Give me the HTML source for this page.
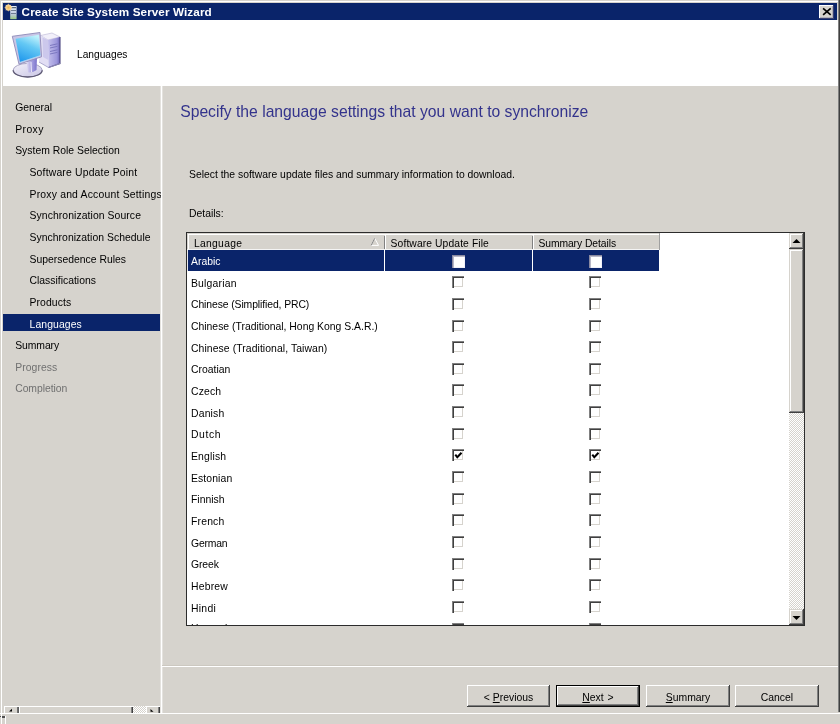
<!DOCTYPE html><html><head><meta charset="utf-8"><style>
html,body{margin:0;padding:0;width:840px;height:724px;overflow:hidden;font-family:"Liberation Sans",sans-serif}
u{text-decoration:underline;text-underline-offset:1px}
</style></head><body><div style="position:relative;width:840px;height:724px;overflow:hidden;will-change:transform">
<div style="position:absolute;left:0px;top:0px;width:840px;height:724px;background:#D6D3CD"></div>
<div style="position:absolute;left:1px;top:1px;width:838px;height:1px;background:#fff"></div>
<div style="position:absolute;left:1px;top:1px;width:1px;height:723px;background:#fff"></div>
<div style="position:absolute;left:838px;top:0px;width:1px;height:712px;background:#808080"></div>
<div style="position:absolute;left:839px;top:0px;width:1px;height:712px;background:#404040"></div>
<div style="position:absolute;left:3px;top:3px;width:834px;height:17px;background:#0A246A"></div>
<div style="position:absolute;left:21.60px;top:6.00px;font-size:11.7px;line-height:11.7px;color:#fff;font-weight:bold;white-space:nowrap;letter-spacing:0.1px">Create Site System Server Wizard</div>
<div style="position:absolute;left:819px;top:5px;width:15px;height:14px;background:#D6D3CD;box-shadow:inset -1px -1px #3A4070, inset 1px 1px #fff, inset -2px -2px #B0B0B8"></div>
<svg style="position:absolute;left:819px;top:5px" width="16" height="14"><path d="M4.1 3.4 L11.7 9.9 M11.7 3.4 L4.1 9.9" stroke="#000" stroke-width="1.7"/></svg>
<div style="position:absolute;left:3px;top:20px;width:835px;height:66px;background:#fff"></div>
<div style="position:absolute;left:77.00px;top:50.47px;font-size:10.2px;line-height:10.2px;color:#000;font-weight:normal;white-space:nowrap;">Languages</div>
<svg style="position:absolute;left:3px;top:3px" width="18" height="18" viewBox="3 3 18 18">
<defs><linearGradient id="srv" x1="0" y1="0" x2="0" y2="1"><stop offset="0" stop-color="#E8F0F8"/><stop offset="0.6" stop-color="#C0CCE0"/><stop offset="1" stop-color="#98C880"/></linearGradient>
<radialGradient id="sun"><stop offset="0" stop-color="#F2B850"/><stop offset="1" stop-color="#F8DCA8"/></radialGradient></defs>
<rect x="10.2" y="6" width="6.4" height="13.2" fill="url(#srv)"/>
<rect x="11" y="7.2" width="5" height="1" fill="#3A4A60"/>
<rect x="11" y="10" width="5" height="0.8" fill="#5A6A80"/>
<rect x="11" y="13.2" width="5" height="0.8" fill="#5A6A80"/>
<circle cx="8.4" cy="7.6" r="3.1" fill="url(#sun)"/><path d="M8.4 3.6 L9.2 4.8 L7.6 4.8 Z M4.4 7.6 L5.6 6.8 L5.6 8.4 Z M12.4 7.6 L11.2 6.8 L11.2 8.4 Z M8.4 11.6 L9.2 10.4 L7.6 10.4 Z M5.6 4.8 L6.9 5.2 L6 6.1 Z M11.2 4.8 L10.8 6.1 L9.9 5.2 Z M5.6 10.4 L6 9.1 L6.9 10 Z M11.2 10.4 L9.9 10 L10.8 9.1 Z" fill="#F6D090"/>
</svg>
<svg style="position:absolute;left:5px;top:25px" width="65" height="60" viewBox="5 25 65 60">
<defs>
<linearGradient id="scr" x1="0.7" y1="0" x2="0.3" y2="1"><stop offset="0" stop-color="#C0F2FC"/><stop offset="0.4" stop-color="#64C8F4"/><stop offset="1" stop-color="#2098EC"/></linearGradient>
<linearGradient id="neck" x1="0" y1="0" x2="1" y2="0"><stop offset="0" stop-color="#E8E4F6"/><stop offset="0.5" stop-color="#A8A2E0"/><stop offset="1" stop-color="#7A72CC"/></linearGradient>
<linearGradient id="front" x1="0" y1="0" x2="1" y2="0"><stop offset="0" stop-color="#C4C0EC"/><stop offset="0.75" stop-color="#9A94DA"/><stop offset="1" stop-color="#6A62B8"/></linearGradient>
<linearGradient id="basef" x1="0" y1="0" x2="1" y2="1"><stop offset="0" stop-color="#F4F2FA"/><stop offset="1" stop-color="#C8C4E4"/></linearGradient>
</defs>
<!-- tower -->
<path d="M40.5 35.5 L52 33 L60 37 L48 40 Z" fill="#F2F0FA" stroke="#B8B4D4" stroke-width="0.6"/>
<path d="M40.5 35.5 L48 40 L48.5 67.5 L39 62 Z" fill="#E2DEF4"/><path d="M42.5 37.5 L48 40 L48.3 60 L43 57 Z" fill="#CCC8EC"/>
<path d="M48 40 L60 37 L60 63.5 L48.5 67.5 Z" fill="url(#front)"/>
<path d="M60 37 L60 63.5 L48.5 67.5" fill="none" stroke="#4C4680" stroke-width="1.1"/>
<path d="M50 45.5 L57.5 43.8 M50 48 L57.5 46.3 M50 51.5 L57.5 49.8 M50 54 L57.5 52.3" stroke="#7C78C0" stroke-width="1"/>
<path d="M39 62 L48.5 67.5 L60 63.5" fill="none" stroke="#9C98C4" stroke-width="0.8"/>
<!-- base -->
<ellipse cx="27.7" cy="70.2" rx="14.5" ry="6.8" fill="url(#basef)" stroke="#A8A4C4" stroke-width="1"/><path d="M13.2 70.2 A14.5 6.8 0 0 0 42.2 70.2" fill="none" stroke="#5E5A74" stroke-width="1.3"/>
<path d="M26 59.5 L37 57 L36.5 70 Q33 73 28 72.3 Z" fill="url(#neck)"/><path d="M31 62 L31.5 72" stroke="#F0EEFA" stroke-width="0.9"/>
<!-- monitor -->
<path d="M12.3 36.3 L40 32.5 L41.5 56.8 L19 64.2 Z" fill="#C8C6E6" stroke="#8E8AB8" stroke-width="0.9"/>
<path d="M15.6 38.8 L39 34.8 L40.4 55.6 L20 62.3 Z" fill="url(#scr)"/>
<path d="M20 62.3 L40.4 55.6" stroke="#A8D8F8" stroke-width="0.8"/>
</svg>
<div style="position:absolute;left:3px;top:705px;width:158px;height:8px;background:#D6D3CD"></div>
<div style="position:absolute;left:19px;top:706px;width:114px;height:7px;background:#D6D3CD;box-shadow:inset 1px 1px #fff, inset -1px 0 #404040, inset -2px 0 #808080"></div>
<div style="position:absolute;left:133px;top:706px;width:13px;height:7px;background-color:#fff;background-image:repeating-conic-gradient(#D6D3CD 0 25%, #fff 0 50%);background-size:2px 2px"></div>
<div style="position:absolute;left:4px;top:706px;width:15px;height:7px;background:#D6D3CD;box-shadow:inset 1px 1px #fff, inset -1px 0 #606060, inset -2px 0 #707070"></div>
<div style="position:absolute;left:146px;top:706px;width:14px;height:7px;background:#D6D3CD;box-shadow:inset 1px 1px #fff, inset -1px 0 #404040, inset -2px 0 #808080"></div>
<svg style="position:absolute;left:0;top:700px" width="170" height="14"><path d="M9 11.5 L12 8.8 L12 11.5 Z" fill="#000"/><path d="M150.5 9 L153.5 11.8 L150.5 11.8 Z" fill="#000"/></svg>
<div style="position:absolute;left:5px;top:716px;width:1px;height:8px;background:#fff"></div>
<div style="position:absolute;left:0px;top:716px;width:1px;height:1px;background:#505050"></div>
<div style="position:absolute;left:2px;top:716px;width:3px;height:1.5px;background:#505050"></div>
<div style="position:absolute;left:160px;top:86px;width:3px;height:627px;background:#E4E2DE"></div>
<div style="position:absolute;left:161px;top:86px;width:1px;height:627px;background:#fff"></div>
<div style="position:absolute;left:0px;top:713px;width:840px;height:1px;background:#fff"></div>
<div style="position:absolute;left:3px;top:313.8px;width:157.4px;height:17.3px;background:#0A246A"></div>
<div style="position:absolute;left:3px;top:86px;width:158px;height:620px;overflow:hidden">
<div style="position:absolute;left:12.20px;top:17.00px;font-size:10.4px;line-height:10.4px;color:#000;letter-spacing:0px;white-space:nowrap">General</div>
<div style="position:absolute;left:12.20px;top:38.65px;font-size:10.4px;line-height:10.4px;color:#000;letter-spacing:0.4px;white-space:nowrap">Proxy</div>
<div style="position:absolute;left:12.20px;top:60.30px;font-size:10.4px;line-height:10.4px;color:#000;letter-spacing:0px;white-space:nowrap">System Role Selection</div>
<div style="position:absolute;left:26.50px;top:81.95px;font-size:10.4px;line-height:10.4px;color:#000;letter-spacing:0.18px;white-space:nowrap">Software Update Point</div>
<div style="position:absolute;left:26.50px;top:103.60px;font-size:10.4px;line-height:10.4px;color:#000;letter-spacing:0.2px;white-space:nowrap">Proxy and Account Settings</div>
<div style="position:absolute;left:26.50px;top:125.25px;font-size:10.4px;line-height:10.4px;color:#000;letter-spacing:0.08px;white-space:nowrap">Synchronization Source</div>
<div style="position:absolute;left:26.50px;top:146.90px;font-size:10.4px;line-height:10.4px;color:#000;letter-spacing:0.04px;white-space:nowrap">Synchronization Schedule</div>
<div style="position:absolute;left:26.50px;top:168.55px;font-size:10.4px;line-height:10.4px;color:#000;letter-spacing:0px;white-space:nowrap">Supersedence Rules</div>
<div style="position:absolute;left:26.50px;top:190.20px;font-size:10.4px;line-height:10.4px;color:#000;letter-spacing:0px;white-space:nowrap">Classifications</div>
<div style="position:absolute;left:26.50px;top:211.85px;font-size:10.4px;line-height:10.4px;color:#000;letter-spacing:0.1px;white-space:nowrap">Products</div>
<div style="position:absolute;left:26.50px;top:233.50px;font-size:10.4px;line-height:10.4px;color:#fff;letter-spacing:0.1px;white-space:nowrap">Languages</div>
<div style="position:absolute;left:12.20px;top:255.15px;font-size:10.4px;line-height:10.4px;color:#000;letter-spacing:-0.08px;white-space:nowrap">Summary</div>
<div style="position:absolute;left:12.20px;top:276.80px;font-size:10.4px;line-height:10.4px;color:#707070;letter-spacing:0.07px;white-space:nowrap">Progress</div>
<div style="position:absolute;left:12.20px;top:298.45px;font-size:10.4px;line-height:10.4px;color:#707070;letter-spacing:-0.06px;white-space:nowrap">Completion</div>
</div>
<div style="position:absolute;left:180.20px;top:104.11px;font-size:15.7px;line-height:15.7px;color:#33338C;font-weight:normal;white-space:nowrap;">Specify the language settings that you want to synchronize</div>
<div style="position:absolute;left:189.00px;top:170.41px;font-size:10.38px;line-height:10.38px;color:#000;font-weight:normal;white-space:nowrap;">Select the software update files and summary information to download.</div>
<div style="position:absolute;left:189.00px;top:209.41px;font-size:10.38px;line-height:10.38px;color:#000;font-weight:normal;white-space:nowrap;">Details:</div>
<div style="position:absolute;left:186px;top:232px;width:619px;height:394px;background:#fff;box-sizing:border-box;border:1px solid #2C2C2C"></div>
<div style="position:absolute;left:187px;top:233px;width:473px;height:17px;background:#D6D3CD"></div>
<div style="position:absolute;left:188px;top:234px;width:472px;height:1px;background:#fff"></div>
<div style="position:absolute;left:188px;top:234px;width:1px;height:15px;background:#fff"></div>
<div style="position:absolute;left:187px;top:249px;width:473px;height:1px;background:#F4F4F4"></div>
<div style="position:absolute;left:384px;top:236px;width:1px;height:13px;background:#808080"></div>
<div style="position:absolute;left:385px;top:234px;width:1px;height:15px;background:#fff"></div>
<div style="position:absolute;left:532px;top:236px;width:1px;height:13px;background:#808080"></div>
<div style="position:absolute;left:533px;top:234px;width:1px;height:15px;background:#fff"></div>
<div style="position:absolute;left:659px;top:233px;width:1px;height:17px;background:#A0A0A0"></div>
<div style="position:absolute;left:194.00px;top:239.18px;font-size:10.3px;line-height:10.3px;color:#000;font-weight:normal;white-space:nowrap;letter-spacing:0.3px">Language</div>
<div style="position:absolute;left:390.60px;top:239.28px;font-size:10.3px;line-height:10.3px;color:#000;font-weight:normal;white-space:nowrap;letter-spacing:0.11px">Software Update File</div>
<div style="position:absolute;left:538.40px;top:239.28px;font-size:10.3px;line-height:10.3px;color:#000;font-weight:normal;white-space:nowrap;letter-spacing:-0.05px">Summary Details</div>
<svg style="position:absolute;left:370px;top:237px" width="10" height="10"><path d="M1.2 8.4 L4.7 1.3 L8.6 8.4 Z" fill="none" stroke="#fff" stroke-width="1"/><path d="M1.2 8.4 L4.7 1.3" stroke="#808080" stroke-width="1"/></svg>
<div style="position:absolute;left:187px;top:250px;width:602px;height:375px;overflow:hidden">
<div style="position:absolute;left:1px;top:0;width:471px;height:21px;background:#0A246A"></div>
<div style="position:absolute;left:0;top:0;width:1px;height:21px;background:#E8E8F0"></div>
<div style="position:absolute;left:197px;top:0;width:1px;height:21px;background:#fff"></div>
<div style="position:absolute;left:345px;top:0;width:1px;height:21px;background:#fff"></div>
<div style="position:absolute;left:4.0px;top:7.10px;font-size:10.4px;line-height:10.4px;color:#fff;letter-spacing:0px;white-space:nowrap">Arabic</div>
<div style="position:absolute;left:265px;top:5px;width:13px;height:13px;box-sizing:border-box;background:#fff;box-shadow:inset 1px 1px #8A8AA0, inset 2px 2px #B8B8C8, inset -1px -1px #F0F0F8"></div>
<div style="position:absolute;left:402px;top:5px;width:13px;height:13px;box-sizing:border-box;background:#fff;box-shadow:inset 1px 1px #8A8AA0, inset 2px 2px #B8B8C8, inset -1px -1px #F0F0F8"></div>
<div style="position:absolute;left:4.0px;top:28.75px;font-size:10.4px;line-height:10.4px;color:#000;letter-spacing:0.19px;white-space:nowrap">Bulgarian</div>
<div style="position:absolute;left:265px;top:26px;width:12px;height:12px;box-sizing:border-box;background:#fff;box-shadow:inset 1px 1px #808080, inset 2px 2px #404040, inset -1px -1px #fff, inset -2px -2px #D6D3CD"></div>
<div style="position:absolute;left:402px;top:26px;width:12px;height:12px;box-sizing:border-box;background:#fff;box-shadow:inset 1px 1px #808080, inset 2px 2px #404040, inset -1px -1px #fff, inset -2px -2px #D6D3CD"></div>
<div style="position:absolute;left:4.0px;top:50.40px;font-size:10.4px;line-height:10.4px;color:#000;letter-spacing:-0.1px;white-space:nowrap">Chinese (Simplified, PRC)</div>
<div style="position:absolute;left:265px;top:48px;width:12px;height:12px;box-sizing:border-box;background:#fff;box-shadow:inset 1px 1px #808080, inset 2px 2px #404040, inset -1px -1px #fff, inset -2px -2px #D6D3CD"></div>
<div style="position:absolute;left:402px;top:48px;width:12px;height:12px;box-sizing:border-box;background:#fff;box-shadow:inset 1px 1px #808080, inset 2px 2px #404040, inset -1px -1px #fff, inset -2px -2px #D6D3CD"></div>
<div style="position:absolute;left:4.0px;top:72.05px;font-size:10.4px;line-height:10.4px;color:#000;letter-spacing:0px;white-space:nowrap">Chinese (Traditional, Hong Kong S.A.R.)</div>
<div style="position:absolute;left:265px;top:70px;width:12px;height:12px;box-sizing:border-box;background:#fff;box-shadow:inset 1px 1px #808080, inset 2px 2px #404040, inset -1px -1px #fff, inset -2px -2px #D6D3CD"></div>
<div style="position:absolute;left:402px;top:70px;width:12px;height:12px;box-sizing:border-box;background:#fff;box-shadow:inset 1px 1px #808080, inset 2px 2px #404040, inset -1px -1px #fff, inset -2px -2px #D6D3CD"></div>
<div style="position:absolute;left:4.0px;top:93.70px;font-size:10.4px;line-height:10.4px;color:#000;letter-spacing:0.08px;white-space:nowrap">Chinese (Traditional, Taiwan)</div>
<div style="position:absolute;left:265px;top:91px;width:12px;height:12px;box-sizing:border-box;background:#fff;box-shadow:inset 1px 1px #808080, inset 2px 2px #404040, inset -1px -1px #fff, inset -2px -2px #D6D3CD"></div>
<div style="position:absolute;left:402px;top:91px;width:12px;height:12px;box-sizing:border-box;background:#fff;box-shadow:inset 1px 1px #808080, inset 2px 2px #404040, inset -1px -1px #fff, inset -2px -2px #D6D3CD"></div>
<div style="position:absolute;left:4.0px;top:115.35px;font-size:10.4px;line-height:10.4px;color:#000;letter-spacing:0px;white-space:nowrap">Croatian</div>
<div style="position:absolute;left:265px;top:113px;width:12px;height:12px;box-sizing:border-box;background:#fff;box-shadow:inset 1px 1px #808080, inset 2px 2px #404040, inset -1px -1px #fff, inset -2px -2px #D6D3CD"></div>
<div style="position:absolute;left:402px;top:113px;width:12px;height:12px;box-sizing:border-box;background:#fff;box-shadow:inset 1px 1px #808080, inset 2px 2px #404040, inset -1px -1px #fff, inset -2px -2px #D6D3CD"></div>
<div style="position:absolute;left:4.0px;top:137.00px;font-size:10.4px;line-height:10.4px;color:#000;letter-spacing:0.15px;white-space:nowrap">Czech</div>
<div style="position:absolute;left:265px;top:134px;width:12px;height:12px;box-sizing:border-box;background:#fff;box-shadow:inset 1px 1px #808080, inset 2px 2px #404040, inset -1px -1px #fff, inset -2px -2px #D6D3CD"></div>
<div style="position:absolute;left:402px;top:134px;width:12px;height:12px;box-sizing:border-box;background:#fff;box-shadow:inset 1px 1px #808080, inset 2px 2px #404040, inset -1px -1px #fff, inset -2px -2px #D6D3CD"></div>
<div style="position:absolute;left:4.0px;top:158.65px;font-size:10.4px;line-height:10.4px;color:#000;letter-spacing:0.18px;white-space:nowrap">Danish</div>
<div style="position:absolute;left:265px;top:156px;width:12px;height:12px;box-sizing:border-box;background:#fff;box-shadow:inset 1px 1px #808080, inset 2px 2px #404040, inset -1px -1px #fff, inset -2px -2px #D6D3CD"></div>
<div style="position:absolute;left:402px;top:156px;width:12px;height:12px;box-sizing:border-box;background:#fff;box-shadow:inset 1px 1px #808080, inset 2px 2px #404040, inset -1px -1px #fff, inset -2px -2px #D6D3CD"></div>
<div style="position:absolute;left:4.0px;top:180.30px;font-size:10.4px;line-height:10.4px;color:#000;letter-spacing:0.6px;white-space:nowrap">Dutch</div>
<div style="position:absolute;left:265px;top:178px;width:12px;height:12px;box-sizing:border-box;background:#fff;box-shadow:inset 1px 1px #808080, inset 2px 2px #404040, inset -1px -1px #fff, inset -2px -2px #D6D3CD"></div>
<div style="position:absolute;left:402px;top:178px;width:12px;height:12px;box-sizing:border-box;background:#fff;box-shadow:inset 1px 1px #808080, inset 2px 2px #404040, inset -1px -1px #fff, inset -2px -2px #D6D3CD"></div>
<div style="position:absolute;left:4.0px;top:201.95px;font-size:10.4px;line-height:10.4px;color:#000;letter-spacing:0.17px;white-space:nowrap">English</div>
<div style="position:absolute;left:265px;top:199px;width:12px;height:12px;box-sizing:border-box;background:#fff;box-shadow:inset 1px 1px #808080, inset 2px 2px #404040, inset -1px -1px #fff, inset -2px -2px #D6D3CD"></div>
<svg style="position:absolute;left:265px;top:199px" width="13" height="13"><path d="M3.3 5.6 L5.3 8.3 L9.5 3.8" fill="none" stroke="#000" stroke-width="2"/></svg>
<div style="position:absolute;left:402px;top:199px;width:12px;height:12px;box-sizing:border-box;background:#fff;box-shadow:inset 1px 1px #808080, inset 2px 2px #404040, inset -1px -1px #fff, inset -2px -2px #D6D3CD"></div>
<svg style="position:absolute;left:402px;top:199px" width="13" height="13"><path d="M3.3 5.6 L5.3 8.3 L9.5 3.8" fill="none" stroke="#000" stroke-width="2"/></svg>
<div style="position:absolute;left:4.0px;top:223.60px;font-size:10.4px;line-height:10.4px;color:#000;letter-spacing:0.11px;white-space:nowrap">Estonian</div>
<div style="position:absolute;left:265px;top:221px;width:12px;height:12px;box-sizing:border-box;background:#fff;box-shadow:inset 1px 1px #808080, inset 2px 2px #404040, inset -1px -1px #fff, inset -2px -2px #D6D3CD"></div>
<div style="position:absolute;left:402px;top:221px;width:12px;height:12px;box-sizing:border-box;background:#fff;box-shadow:inset 1px 1px #808080, inset 2px 2px #404040, inset -1px -1px #fff, inset -2px -2px #D6D3CD"></div>
<div style="position:absolute;left:4.0px;top:245.25px;font-size:10.4px;line-height:10.4px;color:#000;letter-spacing:0px;white-space:nowrap">Finnish</div>
<div style="position:absolute;left:265px;top:243px;width:12px;height:12px;box-sizing:border-box;background:#fff;box-shadow:inset 1px 1px #808080, inset 2px 2px #404040, inset -1px -1px #fff, inset -2px -2px #D6D3CD"></div>
<div style="position:absolute;left:402px;top:243px;width:12px;height:12px;box-sizing:border-box;background:#fff;box-shadow:inset 1px 1px #808080, inset 2px 2px #404040, inset -1px -1px #fff, inset -2px -2px #D6D3CD"></div>
<div style="position:absolute;left:4.0px;top:266.90px;font-size:10.4px;line-height:10.4px;color:#000;letter-spacing:0.18px;white-space:nowrap">French</div>
<div style="position:absolute;left:265px;top:264px;width:12px;height:12px;box-sizing:border-box;background:#fff;box-shadow:inset 1px 1px #808080, inset 2px 2px #404040, inset -1px -1px #fff, inset -2px -2px #D6D3CD"></div>
<div style="position:absolute;left:402px;top:264px;width:12px;height:12px;box-sizing:border-box;background:#fff;box-shadow:inset 1px 1px #808080, inset 2px 2px #404040, inset -1px -1px #fff, inset -2px -2px #D6D3CD"></div>
<div style="position:absolute;left:4.0px;top:288.55px;font-size:10.4px;line-height:10.4px;color:#000;letter-spacing:-0.2px;white-space:nowrap">German</div>
<div style="position:absolute;left:265px;top:286px;width:12px;height:12px;box-sizing:border-box;background:#fff;box-shadow:inset 1px 1px #808080, inset 2px 2px #404040, inset -1px -1px #fff, inset -2px -2px #D6D3CD"></div>
<div style="position:absolute;left:402px;top:286px;width:12px;height:12px;box-sizing:border-box;background:#fff;box-shadow:inset 1px 1px #808080, inset 2px 2px #404040, inset -1px -1px #fff, inset -2px -2px #D6D3CD"></div>
<div style="position:absolute;left:4.0px;top:310.20px;font-size:10.4px;line-height:10.4px;color:#000;letter-spacing:-0.1px;white-space:nowrap">Greek</div>
<div style="position:absolute;left:265px;top:308px;width:12px;height:12px;box-sizing:border-box;background:#fff;box-shadow:inset 1px 1px #808080, inset 2px 2px #404040, inset -1px -1px #fff, inset -2px -2px #D6D3CD"></div>
<div style="position:absolute;left:402px;top:308px;width:12px;height:12px;box-sizing:border-box;background:#fff;box-shadow:inset 1px 1px #808080, inset 2px 2px #404040, inset -1px -1px #fff, inset -2px -2px #D6D3CD"></div>
<div style="position:absolute;left:4.0px;top:331.85px;font-size:10.4px;line-height:10.4px;color:#000;letter-spacing:0.2px;white-space:nowrap">Hebrew</div>
<div style="position:absolute;left:265px;top:329px;width:12px;height:12px;box-sizing:border-box;background:#fff;box-shadow:inset 1px 1px #808080, inset 2px 2px #404040, inset -1px -1px #fff, inset -2px -2px #D6D3CD"></div>
<div style="position:absolute;left:402px;top:329px;width:12px;height:12px;box-sizing:border-box;background:#fff;box-shadow:inset 1px 1px #808080, inset 2px 2px #404040, inset -1px -1px #fff, inset -2px -2px #D6D3CD"></div>
<div style="position:absolute;left:4.0px;top:353.50px;font-size:10.4px;line-height:10.4px;color:#000;letter-spacing:0.27px;white-space:nowrap">Hindi</div>
<div style="position:absolute;left:265px;top:351px;width:12px;height:12px;box-sizing:border-box;background:#fff;box-shadow:inset 1px 1px #808080, inset 2px 2px #404040, inset -1px -1px #fff, inset -2px -2px #D6D3CD"></div>
<div style="position:absolute;left:402px;top:351px;width:12px;height:12px;box-sizing:border-box;background:#fff;box-shadow:inset 1px 1px #808080, inset 2px 2px #404040, inset -1px -1px #fff, inset -2px -2px #D6D3CD"></div>
<div style="position:absolute;left:4.0px;top:374.15px;font-size:10.4px;line-height:10.4px;color:#000;letter-spacing:0px;white-space:nowrap">Hungarian</div>
<div style="position:absolute;left:265px;top:373px;width:12px;height:12px;box-sizing:border-box;background:#fff;box-shadow:inset 1px 1px #808080, inset 2px 2px #404040, inset -1px -1px #fff, inset -2px -2px #D6D3CD"></div>
<div style="position:absolute;left:402px;top:373px;width:12px;height:12px;box-sizing:border-box;background:#fff;box-shadow:inset 1px 1px #808080, inset 2px 2px #404040, inset -1px -1px #fff, inset -2px -2px #D6D3CD"></div>
</div>
<div style="position:absolute;left:789px;top:233px;width:15px;height:392px;background-color:#fff;background-image:repeating-conic-gradient(#D6D3CD 0 25%, #fff 0 50%);background-size:2px 2px"></div>
<div style="position:absolute;left:789px;top:233px;width:15px;height:16px;background:#D6D3CD;box-shadow:inset -1px -1px #404040, inset 1px 1px #D6D3CD, inset -2px -2px #808080, inset 2px 2px #fff"></div>
<div style="position:absolute;left:789px;top:249px;width:15px;height:164px;background:#D6D3CD;box-shadow:inset -1px -1px #404040, inset 1px 1px #D6D3CD, inset -2px -2px #808080, inset 2px 2px #fff"></div>
<div style="position:absolute;left:789px;top:609px;width:15px;height:16px;background:#D6D3CD;box-shadow:inset -1px -1px #404040, inset 1px 1px #D6D3CD, inset -2px -2px #808080, inset 2px 2px #fff"></div>
<svg style="position:absolute;left:789px;top:233px" width="15" height="16"><path d="M3.5 10 L7.5 6 L11.5 10 Z" fill="#000"/></svg>
<svg style="position:absolute;left:789px;top:609px" width="15" height="16"><path d="M3.5 7 L11.5 7 L7.5 11 Z" fill="#000"/></svg>
<div style="position:absolute;left:162px;top:666px;width:676px;height:1px;background:#fff"></div>
<div style="position:absolute;left:162px;top:665px;width:676px;height:1px;background:#CCC8C0"></div>
<div style="position:absolute;left:467px;top:685px;width:83px;height:22px;background:#D6D3CD;box-shadow:inset -1px -1px #404040, inset 1px 1px #fff, inset -2px -2px #808080"></div>
<div style="position:absolute;left:467px;top:686.6px;width:83px;height:22px;font-size:10.4px;line-height:22px;text-align:center;color:#000;white-space:nowrap">&lt; <u>P</u>revious</div>
<div style="position:absolute;left:556px;top:685px;width:84px;height:22px;background:#D6D3CD;box-sizing:border-box;border:1px solid #000;box-shadow:inset -1px -1px #404040, inset 1px 1px #fff, inset -2px -2px #808080"></div>
<div style="position:absolute;left:556px;top:686.6px;width:84px;height:22px;font-size:10.4px;line-height:22px;text-align:center;color:#000;white-space:nowrap"><u>N</u>ext <span style="margin-left:1px">&gt;</span></div>
<div style="position:absolute;left:646px;top:685px;width:84px;height:22px;background:#D6D3CD;box-shadow:inset -1px -1px #404040, inset 1px 1px #fff, inset -2px -2px #808080"></div>
<div style="position:absolute;left:646px;top:686.6px;width:84px;height:22px;font-size:10.4px;line-height:22px;text-align:center;color:#000;white-space:nowrap"><u>S</u>ummary</div>
<div style="position:absolute;left:735px;top:685px;width:84px;height:22px;background:#D6D3CD;box-shadow:inset -1px -1px #404040, inset 1px 1px #fff, inset -2px -2px #808080"></div>
<div style="position:absolute;left:735px;top:686.6px;width:84px;height:22px;font-size:10.4px;line-height:22px;text-align:center;color:#000;white-space:nowrap">Cancel</div>
</div></body></html>
